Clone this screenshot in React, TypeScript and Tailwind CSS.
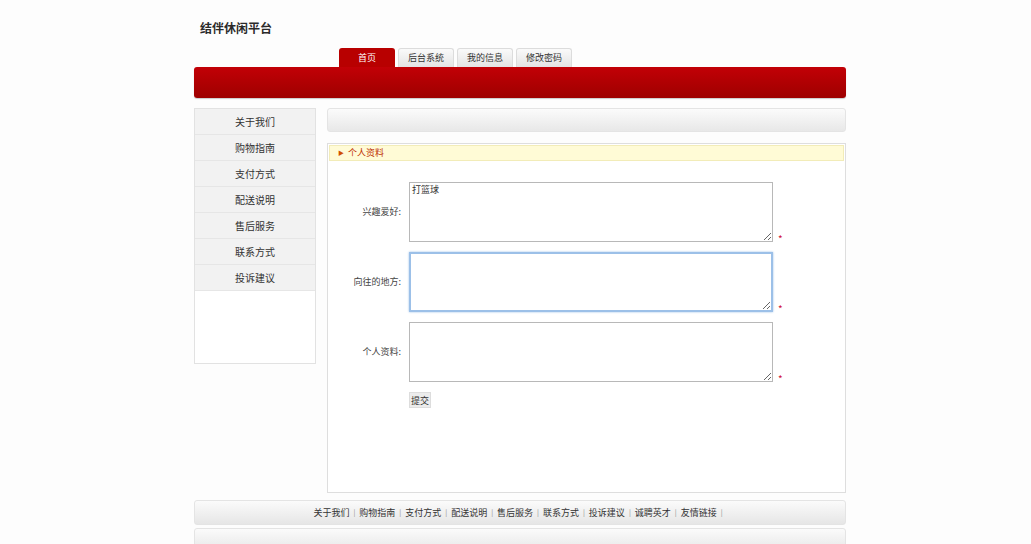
import React from "react"

const tabs = ["首页", "后台系统", "我的信息", "修改密码"]
const sideLinks = ["关于我们", "购物指南", "支付方式", "配送说明", "售后服务", "联系方式", "投诉建议"]
const footLinks = ["关于我们", "购物指南", "支付方式", "配送说明", "售后服务", "联系方式", "投诉建议", "诚聘英才", "友情链接"]

function Field({ label, value, focused }: { label: string; value?: string; focused?: boolean }) {
  return (
    <div className="flex items-end">
      <div className="w-[80px] self-center pr-[8px] text-right text-[9px] text-[#444]">{label}:</div>
      <textarea
        defaultValue={value}
        className={
          "h-[60px] w-[364px] resize-y px-[2px] py-[1px] text-[9px] leading-[12px] text-[#333] outline-none " +
          (focused
            ? "border-2 border-[#9cc0e8] shadow-[0_0_2px_#9cc0e8]"
            : "border border-[#b8b8b8]")
        }
      />
      <span className="ml-[5px] text-[10px] leading-[6px] text-[#d0103a]">*</span>
    </div>
  )
}

export default function App() {
  return (
    <div className="min-h-screen bg-[#fdfdfd] font-['Noto_Sans_CJK_SC','Noto_Sans',sans-serif] text-[#333]">
      <div className="ml-[194px] w-[652px] pt-[19px]">
        <h1 className="pl-[6px] text-[12px] font-bold leading-[18px] text-[#2a2a2a]">结伴休闲平台</h1>

        <div className="mt-[11px] flex gap-[3px] pl-[145px]">
          {tabs.map((t, i) => (
            <div
              key={t}
              className={
                "flex h-[19px] w-[56px] items-center justify-center rounded-t-[3px] text-[9px] " +
                (i === 0
                  ? "bg-[#b80000] text-white"
                  : "border border-b-0 border-[#dcdcdc] bg-gradient-to-b from-[#fafafa] to-[#e4e4e4] text-[#333]")
              }
            >
              {t}
            </div>
          ))}
        </div>
        <div className="h-[31px] rounded-[3px] bg-gradient-to-b from-[#c20006] to-[#9e0000] shadow-[0_1px_1px_rgba(0,0,0,0.2)]" />

        <div className="mt-[10px] flex gap-[11px]">
          <div className="h-[256px] w-[122px] border border-[#e2e2e2] bg-white">
            {sideLinks.map((s) => (
              <div
                key={s}
                className="flex h-[26px] items-center justify-center border-b border-[#e6e6e6] bg-[#f2f2f2] text-[10px] text-[#333]"
              >
                {s}
              </div>
            ))}
          </div>

          <div className="flex-1">
            <div className="h-[24px] rounded-[3px] border border-[#e4e4e4] bg-gradient-to-b from-[#fbfbfb] to-[#e8e8e8]" />
            <div className="mt-[11px] h-[350px] border border-[#dedede] bg-white p-[1px]">
              <div className="flex h-[16px] items-center gap-[4px] border border-[#f2ecb8] bg-[#fffbd6] pl-[8px] text-[9px] text-[#c03000]">
                <span className="text-[6px] leading-none text-[#d05000]">▶</span>
                <span>个人资料</span>
              </div>
              <div className="flex flex-col gap-[10px] pt-[21px]">
                <Field label="兴趣爱好" value="打篮球" />
                <Field label="向往的地方" focused />
                <Field label="个人资料" />
                <div className="flex pl-[80px]">
                  <button className="h-[16px] w-[22px] border border-[#dddddd] bg-[#ececec] text-[9px] leading-none text-[#333]">
                    提交
                  </button>
                </div>
              </div>
            </div>
          </div>
        </div>

        <div className="mt-[7px] flex h-[25px] items-center justify-center rounded-[3px] border border-[#e4e4e4] bg-gradient-to-b from-[#fbfbfb] to-[#e6e6e6] text-[9px] text-[#333]">
          {footLinks.map((f) => (
            <span key={f} className="flex items-center">
              <span>{f}</span>
              <span className="mx-[4px] text-[7px] text-[#888]">|</span>
            </span>
          ))}
        </div>
        <div className="mt-[3px] h-[25px] rounded-[3px] border border-[#e4e4e4] bg-gradient-to-b from-[#fbfbfb] to-[#e6e6e6]" />
      </div>
    </div>
  )
}
